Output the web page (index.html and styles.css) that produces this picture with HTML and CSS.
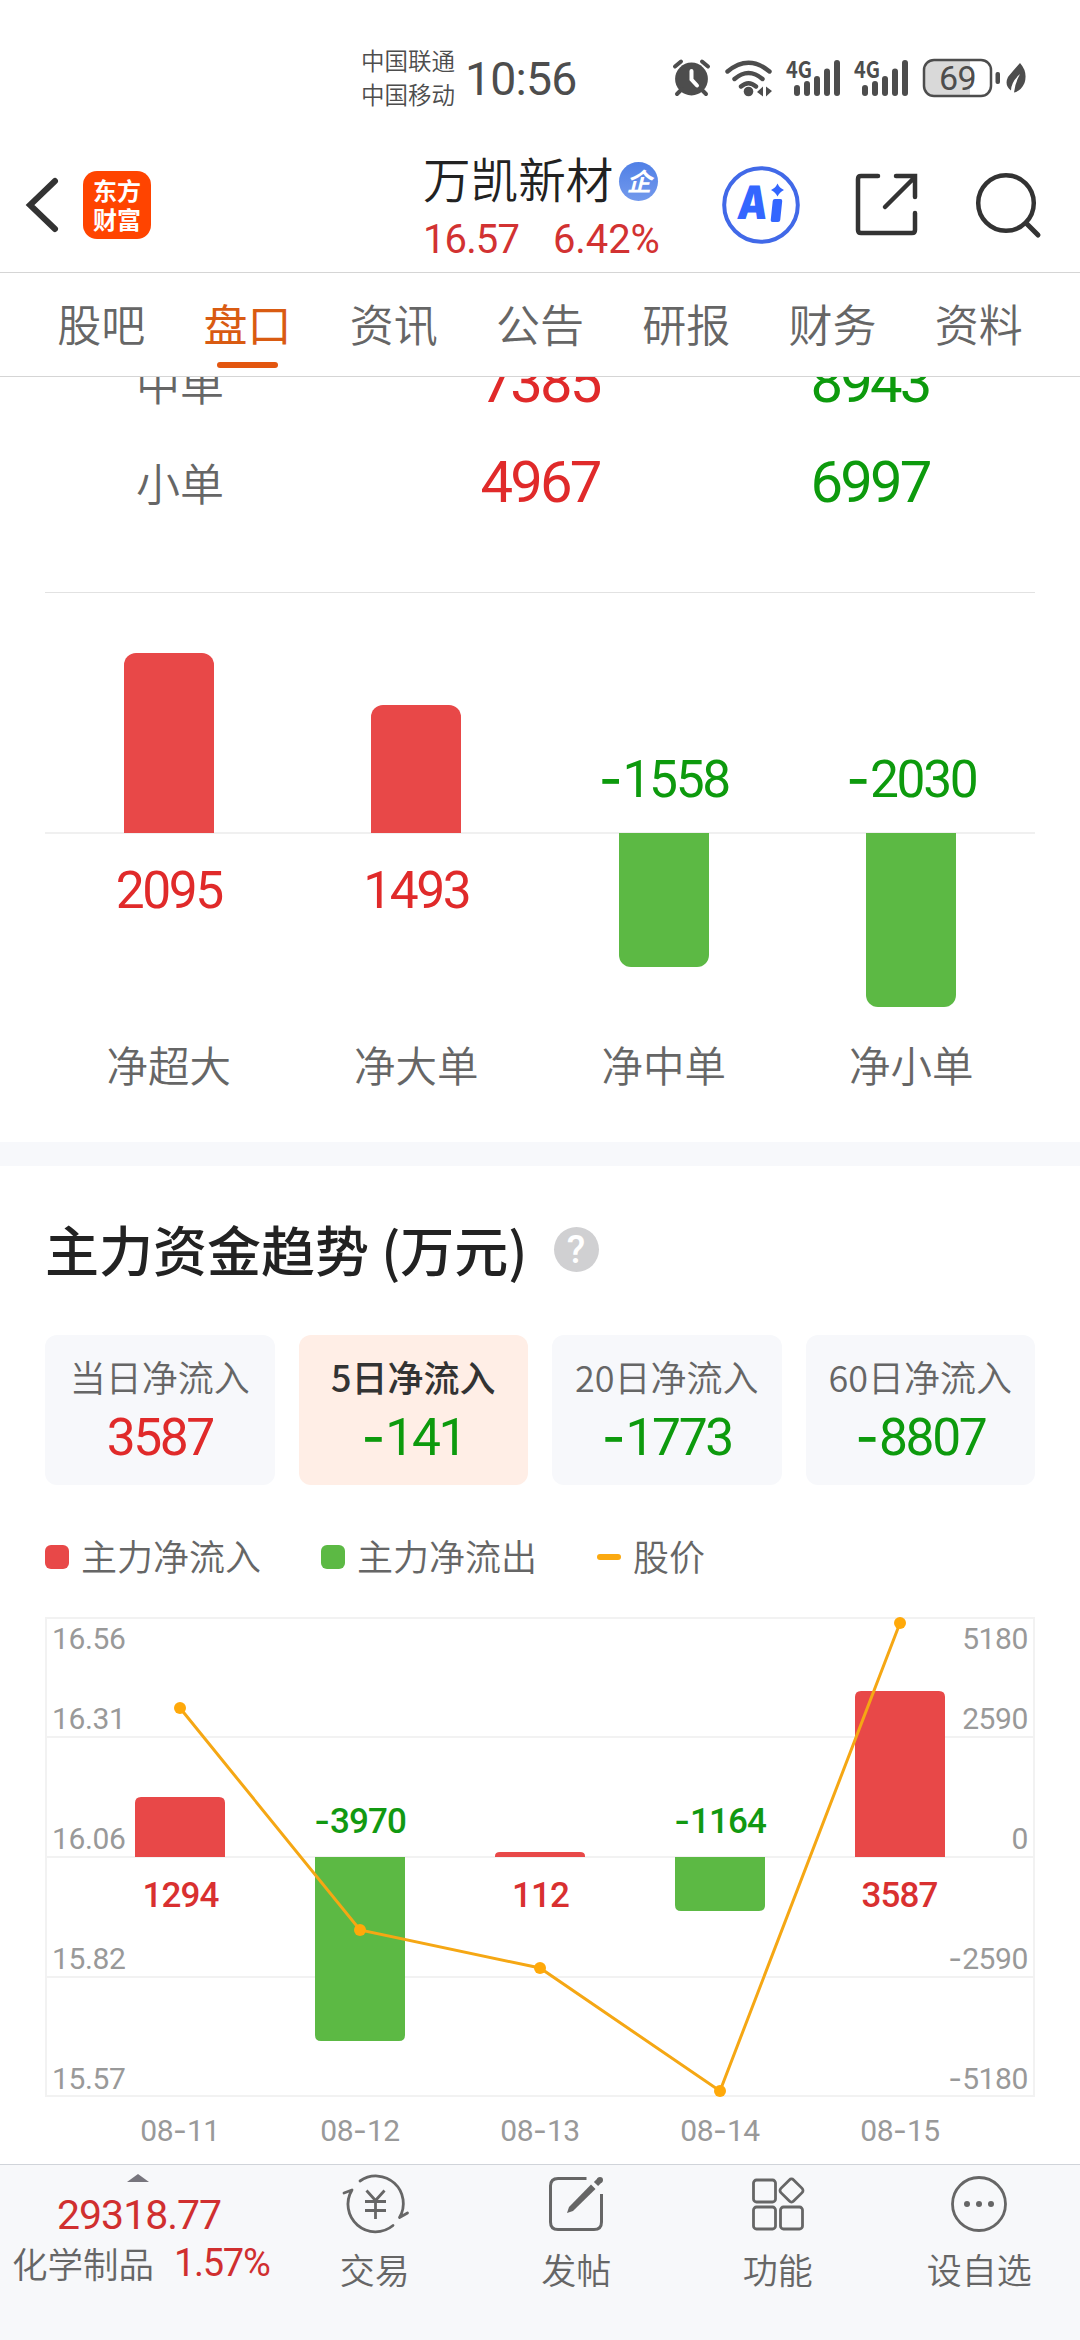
FILE: index.html
```html
<!DOCTYPE html>
<html lang="zh-CN">
<head>
    <meta charset="UTF-8">
    <meta name="viewport" content="width=device-width, initial-scale=1.0">
    <title>万凯新材 - 盘口</title>
    <link rel="stylesheet" href="styles.css">
</head>
<body>
    <!-- Status bar -->
    <div class="status-bar">
        <div class="carriers">
            <div>中国联通</div>
            <div>中国移动</div>
        </div>
        <div class="time">10:56</div>
        <svg class="status-icons" width="360" height="46" viewBox="0 0 360 46">
            <!-- alarm -->
            <g fill="none" stroke="#4d4d4d" stroke-width="4" stroke-linecap="round">
                <circle cx="20.5" cy="24" r="16.4" fill="#4d4d4d" stroke="none"/>
                <path d="M4 11.5L10 6.5M31 6.5L37 11.5M6 39L11 34M35 39L30 34"/>
                <path d="M20.5 16V24.5L26 30.5" stroke="#fff"/>
            </g>
            <!-- wifi -->
            <g fill="none" stroke="#4d4d4d" stroke-width="4.4" stroke-linecap="round">
                <path d="M56.5 16.5Q77.5 -1 98.5 16.5M63.5 24Q77.5 12 91.5 24M70 31.5Q77.5 25 85 31.5"/>
                <circle cx="77.5" cy="36.5" r="4.8" fill="#4d4d4d" stroke="none"/>
                <path d="M92 31.5V41.5L86 37ZM95 31.5V41.5L101 36Z" fill="#4d4d4d" stroke="none"/>
            </g>
            <!-- signals -->
            <g fill="#4d4d4d">
                <text class="net" x="115" y="22.5" textLength="26" lengthAdjust="spacingAndGlyphs">4G</text>
                <rect x="123" y="30" width="6" height="11" rx="3"/>
                <rect x="133" y="26" width="6" height="15" rx="3"/>
                <rect x="143" y="21" width="6" height="20" rx="3"/>
                <rect x="153" y="13.5" width="6" height="27.5" rx="3"/>
                <rect x="163" y="5" width="6" height="36" rx="3"/>
                <text class="net" x="183" y="22.5" textLength="26" lengthAdjust="spacingAndGlyphs">4G</text>
                <rect x="191" y="30" width="6" height="11" rx="3"/>
                <rect x="201" y="26" width="6" height="15" rx="3"/>
                <rect x="211" y="21" width="6" height="20" rx="3"/>
                <rect x="221" y="13.5" width="6" height="27.5" rx="3"/>
                <rect x="231" y="5" width="6" height="36" rx="3"/>
            </g>
            <!-- battery -->
            <path d="M299 5H264Q254 5 254 15V31Q254 41 264 41H299Z" fill="#d9d9d9"/>
            <rect x="253" y="5" width="67" height="36" rx="10" fill="none" stroke="#4d4d4d" stroke-width="2.5"/>
            <text class="battery" x="286.5" y="35" text-anchor="middle">69</text>
            <rect x="324.5" y="17" width="4.5" height="12" rx="2" fill="#4d4d4d"/>
            <path d="M349 8Q357 17 353.5 28Q350 36 343 37.5Q344 28 349 19Q340 27 340 35.5Q333 30 337 22Q341 17 349 8Z" fill="#4d4d4d"/>
        </svg>
    </div>

    <!-- Header -->
    <div class="header">
        <svg class="back" width="34" height="60" viewBox="0 0 34 60">
            <path d="M29 6L4 30L29 54" fill="none" stroke="#333" stroke-width="6" stroke-linecap="round"/>
        </svg>
        <div class="logo">东方<br>财富</div>
        <div class="stock">
            <div class="stock-name">万凯新材<span class="badge">企</span></div>
            <div class="stock-price"><span>16.57</span><span class="percent">6.42%</span></div>
        </div>
        <div class="header-icons">
            <svg width="80" height="80" viewBox="0 0 80 80">
                <circle cx="40" cy="40" r="36.8" fill="none" stroke="#4169e8" stroke-width="4"/>
                <g transform="translate(6 0) skewX(-6)" fill="#3366ff">
                    <text class="ai" x="15" y="54" textLength="30" lengthAdjust="spacingAndGlyphs">A</text>
                    <rect x="49.5" y="34" width="9.5" height="23" rx="2"/>
                </g>
                <path d="M56.5 18.5Q58.5 23 63 25Q58.500 27 56.5 31.5Q54.500 27 50 25Q54.500 23 56.5 18.5Z" fill="#3366ff"/>
            </svg>
            <svg width="66" height="66" viewBox="0 0 66 66">
                <path d="M24 4H7Q4 4 4 7V58Q4 61 7 61H58Q61 61 61 58V41M42 4H61V25M31 35L60 6" fill="none" stroke="#333" stroke-width="4.5" stroke-linecap="round"/>
            </svg>
            <svg width="70" height="70" viewBox="0 0 70 70">
                <circle cx="32" cy="32" r="27.8" fill="none" stroke="#333" stroke-width="4.5"/>
                <path d="M52 52L64 64" stroke="#333" stroke-width="5" stroke-linecap="round"/>
            </svg>
        </div>
    </div>

    <!-- Tabs -->
    <div class="tabs">
        <div class="tab">股吧</div>
        <div class="tab active">盘口</div>
        <div class="tab">资讯</div>
        <div class="tab">公告</div>
        <div class="tab">研报</div>
        <div class="tab">财务</div>
        <div class="tab">资料</div>
    </div>

    <div class="content">
        <!-- Order table -->
        <div class="orders">
            <div class="order-row">
                <div class="order-name">中单</div>
                <div class="order-num red">7385</div>
                <div class="order-num green">8943</div>
            </div>
            <div class="order-row">
                <div class="order-name">小单</div>
                <div class="order-num red">4967</div>
                <div class="order-num green">6997</div>
            </div>
        </div>

        <!-- Net order bars -->
        <div class="net-chart">
            <div class="net-col">
                <div class="upper"><div class="bar up" style="height: 180px"></div></div>
                <div class="lower"><div class="net-value red">2095</div></div>
                <div class="net-label">净超大</div>
            </div>
            <div class="net-col">
                <div class="upper"><div class="bar up" style="height: 128px"></div></div>
                <div class="lower"><div class="net-value red">1493</div></div>
                <div class="net-label">净大单</div>
            </div>
            <div class="net-col">
                <div class="upper"><div class="net-value green"><span class="minus">-</span>1558</div></div>
                <div class="lower"><div class="bar down" style="height: 134px"></div></div>
                <div class="net-label">净中单</div>
            </div>
            <div class="net-col">
                <div class="upper"><div class="net-value green"><span class="minus">-</span>2030</div></div>
                <div class="lower"><div class="bar down" style="height: 174px"></div></div>
                <div class="net-label">净小单</div>
            </div>
        </div>

        <!-- Main fund trend -->
        <div class="trend">
            <div class="trend-title">主力资金趋势 (万元)<span class="help">?</span></div>
            <div class="cards">
                <div class="card">
                    <div class="card-label">当日净流入</div>
                    <div class="card-value red">3587</div>
                </div>
                <div class="card selected">
                    <div class="card-label">5日净流入</div>
                    <div class="card-value green"><span class="minus">-</span>141</div>
                </div>
                <div class="card">
                    <div class="card-label">20日净流入</div>
                    <div class="card-value green"><span class="minus">-</span>1773</div>
                </div>
                <div class="card">
                    <div class="card-label">60日净流入</div>
                    <div class="card-value green"><span class="minus">-</span>8807</div>
                </div>
            </div>
            <div class="legend">
                <div class="legend-item"><span class="dot dot-red"></span>主力净流入</div>
                <div class="legend-item"><span class="dot dot-green"></span>主力净流出</div>
                <div class="legend-item"><span class="dash"></span>股价</div>
            </div>
        </div>
        <svg class="trend-chart" width="1080" height="589" viewBox="0 0 1080 589">
            <path d="M46 43H1034V521H46ZM46 162H1034M46 282H1034M46 402H1034" fill="none" stroke="#f2f2f2" stroke-width="2"/>
            <g class="axis">
                <text x="52" y="73.5">16.56</text>
                <text x="52" y="153.5">16.31</text>
                <text x="52" y="273.5">16.06</text>
                <text x="52" y="393.5">15.82</text>
                <text x="52" y="513.5">15.57</text>
            </g>
            <g class="axis" text-anchor="end">
                <text x="1028" y="73.5">5180</text>
                <text x="1028" y="153.5">2590</text>
                <text x="1028" y="273.5">0</text>
                <text x="1028" y="393.5"><tspan class="minus">-</tspan>2590</text>
                <text x="1028" y="513.5"><tspan class="minus">-</tspan>5180</text>
            </g>
            <g fill="#e84848">
                <path d="M135 282V228Q135 222 141 222H219Q225 222 225 228V282Z"/>
                <path d="M495 282V281Q495 277 500 277H580Q585 277 585 281V282Z"/>
                <path d="M855 282V122Q855 116 861 116H939Q945 116 945 122V282Z"/>
            </g>
            <g fill="#5cb944">
                <path d="M315 282V460Q315 466 321 466H399Q405 466 405 460V282Z"/>
                <path d="M675 282V330Q675 336 681 336H759Q765 336 765 330V282Z"/>
            </g>
            <g class="point-value red-text" text-anchor="middle">
                <text x="180.5" y="332">1294</text>
                <text x="540.5" y="332">112</text>
                <text x="899.5" y="332">3587</text>
            </g>
            <g class="point-value green-text" text-anchor="middle">
                <text x="360" y="258"><tspan class="minus">-</tspan>3970</text>
                <text x="720" y="258"><tspan class="minus">-</tspan>1164</text>
            </g>
            <polyline points="180,133 360,355 540,393 720,516 900,48" fill="none" stroke="#f5a714" stroke-width="3"/>
            <g fill="#ffa90a">
                <circle cx="180" cy="133" r="6"/>
                <circle cx="360" cy="355" r="6"/>
                <circle cx="540" cy="393" r="6"/>
                <circle cx="720" cy="516" r="6"/>
                <circle cx="900" cy="48" r="6"/>
            </g>
            <g class="axis" text-anchor="middle">
                <text x="180" y="566">08<tspan class="minus">-</tspan>11</text>
                <text x="360" y="566">08<tspan class="minus">-</tspan>12</text>
                <text x="540" y="566">08<tspan class="minus">-</tspan>13</text>
                <text x="720" y="566">08<tspan class="minus">-</tspan>14</text>
                <text x="900" y="566">08<tspan class="minus">-</tspan>15</text>
            </g>
        </svg>
    </div>

    <!-- Bottom bar -->
    <div class="bottom-bar">
        <div class="index">
            <div class="arrow-up"></div>
            <div class="index-value">29318.77</div>
            <div class="index-info"><span>化学制品</span><span class="index-percent">1.57%</span></div>
        </div>
        <div class="nav-item">
            <svg width="70" height="66" viewBox="0 0 70 66">
                <g fill="none" stroke="#666" stroke-width="2.8" stroke-linecap="round" stroke-linejoin="round">
                    <path d="M20 11A27.5 27.5 0 0 1 59.5 47.5L67.5 43"/>
                    <path d="M53 55.5A27.5 27.5 0 0 1 12 20L4 23"/>
                    <path d="M26.5 20.5L35.5 30.5L44.5 20.5M25 31.5H46M25 40.5H46M35.5 30V49" stroke-linecap="butt"/>
                </g>
            </svg>
            <div>交易</div>
        </div>
        <div class="nav-item">
            <svg width="70" height="66" viewBox="0 0 70 66">
                <path d="M45.5 8.5H17Q9.5 8.5 9.5 16V52Q9.5 59.5 17 59.5H53Q60.5 59.5 60.5 52V24" fill="none" stroke="#666" stroke-width="3"/>
                <path d="M26 43L28 37L50 14.5L54.5 19L32 41Z" fill="#666"/>
                <path d="M55 14L59 10" stroke="#666" stroke-width="6"/>
                <circle cx="59" cy="10" r="3" fill="#666"/>
            </svg>
            <div>发帖</div>
        </div>
        <div class="nav-item">
            <svg width="70" height="66" viewBox="0 0 70 66">
                <g fill="none" stroke="#666" stroke-width="2.8">
                    <rect x="10.5" y="10" width="22" height="22" rx="3"/>
                    <rect x="10.5" y="37" width="22" height="22" rx="3"/>
                    <rect x="37.5" y="37" width="22" height="22" rx="3"/>
                    <rect x="39.5" y="11.5" width="18" height="18" rx="3" transform="rotate(45 48.5 20.5)"/>
                </g>
            </svg>
            <div>功能</div>
        </div>
        <div class="nav-item">
            <svg width="70" height="66" viewBox="0 0 70 66">
                <circle cx="35" cy="34" r="26.5" fill="none" stroke="#666" stroke-width="2.8"/>
                <g fill="#666">
                    <circle cx="23" cy="34" r="3"/>
                    <circle cx="35" cy="34" r="3"/>
                    <circle cx="47" cy="34" r="3"/>
                </g>
            </svg>
            <div>设自选</div>
        </div>
    </div>
</body>
</html>
```
FILE: styles.css
```css
/* Global styles */
* {
    box-sizing: border-box;
}

body {
    margin: 0;
    width: 1080px;
    height: 2340px;
    display: flex;
    flex-direction: column;
    overflow: hidden;
    background-color: #fff;
    font-family: "Noto Sans CJK SC", sans-serif;
    font-weight: 350;
    color: #666;
}

svg {
    display: block;
    flex-shrink: 0;
    overflow: visible;
}

/* Number styles */
.time,
.battery,
.stock-price,
.order-num,
.net-value,
.card-value,
.axis,
.point-value,
.index-value,
.index-percent,
.help {
    font-family: "Roboto", sans-serif;
    font-weight: 400;
}

.red {
    color: #e02a2a;
}

.green {
    color: #0d9a0d;
}

.minus {
    font-family: "Inter", sans-serif;
    line-height: 0;
    letter-spacing: 0;
}

/* Status bar */
.status-bar {
    height: 147px;
    padding: 43px 30px 0 361px;
    display: flex;
    align-items: flex-start;
    color: #4d4d4d;
}

.carriers {
    font-size: 23.5px;
    line-height: 34px;
    width: 104px;
}

.time {
    font-size: 46.4px;
    line-height: 72px;
    width: 205px;
    letter-spacing: -0.8px;
}

.status-icons {
    margin-top: 12px;
    margin-left: 1px;
}

.net {
    font-family: "Noto Sans CJK SC", sans-serif;
    font-size: 23px;
    font-weight: 700;
}

.battery {
    font-size: 34px;
    letter-spacing: -0.5px;
    fill: #4d4d4d;
}

/* Header */
.header {
    height: 126px;
    display: flex;
    align-items: flex-start;
    border-bottom: 1px solid #d5d5d5;
}

.back {
    margin: 28px 0 0 26px;
}

.logo {
    width: 68px;
    height: 68px;
    margin: 24px 0 0 23px;
    padding-top: 4px;
    border-radius: 14px;
    background-color: #ff4400;
    color: #fff;
    font-size: 24px;
    font-weight: 700;
    line-height: 29px;
    text-align: center;
}

.stock {
    margin-left: 272px;
    width: 292px;
    padding-top: 1px;
}

.stock-name {
    height: 60px;
    display: flex;
    align-items: center;
    font-size: 47.6px;
    line-height: 60px;
    color: #222;
}

.badge {
    width: 39px;
    height: 39px;
    margin: 7px 0 0 6px;
    border-radius: 50%;
    background: linear-gradient(#5080e6, #7399ec);
    color: #fff;
    font-size: 25px;
    font-weight: 700;
    font-style: italic;
    line-height: 36px;
    text-align: center;
}

.stock-price {
    display: flex;
    font-size: 40px;
    line-height: 63px;
    letter-spacing: -0.9px;
    color: #d23232;
}

.percent {
    margin-left: 34px;
    letter-spacing: -0.1px;
}

.header-icons {
    display: flex;
    align-items: flex-start;
    padding-top: 18px;
    margin-left: 6px;
}

.header-icons svg:nth-child(2) {
    margin: 7px 0 0 53px;
}

.header-icons svg:nth-child(3) {
    margin: 6px 0 0 54px;
}

/* Tabs */
.tabs {
    height: 104px;
    padding: 0 28px;
    display: flex;
    border-bottom: 1px solid #d5d5d5;
}

.tab {
    flex: 1;
    display: flex;
    flex-direction: column;
    align-items: center;
    padding-top: 20px;
    font-size: 44px;
    line-height: 60px;
}

.tab.active {
    color: #d95b12;
    font-weight: 400;
}

.tab.active::after {
    content: "";
    width: 61px;
    height: 6px;
    margin-top: 9px;
    border-radius: 3px;
    background-color: #e3560f;
}

/* Scrolled content */
.content {
    height: 1787px;
    overflow: hidden;
}

.orders {
    margin: -45px 45px 0;
    padding-bottom: 60px;
    border-bottom: 1px solid #e2e2e2;
}

.order-row {
    height: 100px;
    display: grid;
    grid-template-columns: 270px 450px 210px;
    align-items: center;
    text-align: center;
}

.order-name {
    font-size: 44px;
}

.order-num {
    font-size: 58px;
    font-weight: 450;
    letter-spacing: -2.8px;
}

/* Net order bars */
.net-chart {
    height: 549px;
    padding: 0 45px;
    display: flex;
    background: linear-gradient(#f0f0f0, #f0f0f0) 45px 239px / 990px 2px no-repeat;
}

.net-col {
    flex: 1;
    text-align: center;
}

.upper {
    height: 240px;
    display: flex;
    flex-direction: column;
    justify-content: flex-end;
    align-items: center;
}

.lower {
    height: 201px;
    display: flex;
    flex-direction: column;
    align-items: center;
}

.bar {
    width: 90px;
}

.bar.up {
    background-color: #e84848;
    border-radius: 12px 12px 0 0;
}

.bar.down {
    background-color: #5cb944;
    border-radius: 0 0 12px 12px;
}

.net-value,
.card-value {
    font-size: 51.5px;
    font-weight: 450;
    line-height: 60px;
    letter-spacing: -2.4px;
}

.upper .net-value {
    margin-bottom: 23px;
}

.lower .net-value {
    margin-top: 28px;
}

.net-label {
    font-size: 41.5px;
    line-height: 60px;
}

/* Main fund trend */
.trend {
    padding: 43px 45px 0;
    border-top: 24px solid #f7f8fb;
}

.trend-title {
    display: flex;
    align-items: center;
    font-size: 54px;
    font-weight: 500;
    line-height: 80px;
    color: #222;
}

.help {
    width: 45px;
    height: 45px;
    margin-left: 26px;
    border-radius: 50%;
    background-color: #d0d0d2;
    color: #fff;
    font-size: 38px;
    font-weight: 500;
    line-height: 46px;
    text-align: center;
}

.cards {
    display: grid;
    grid-template-columns: repeat(4, 1fr);
    gap: 24px;
    margin-top: 46px;
}

.card {
    height: 150px;
    padding-top: 16px;
    border-radius: 12px;
    background-color: #f7f8fb;
    text-align: center;
}

.card.selected {
    background-color: #ffeee6;
}

.card-label {
    font-size: 36px;
    line-height: 50px;
}

.selected .card-label {
    color: #333;
    font-weight: 500;
}

.card-value {
    margin-top: 7px;
}

.legend {
    display: flex;
    gap: 60px;
    margin-top: 50px;
    font-size: 36px;
    line-height: 40px;
}

.legend-item {
    display: flex;
    gap: 12px;
}

.dot {
    width: 24px;
    height: 24px;
    margin-top: 10px;
    border-radius: 6px;
}

.dot-red {
    background-color: #e84848;
}

.dot-green {
    background-color: #5cb944;
}

.dash {
    width: 24px;
    height: 6px;
    margin-top: 19px;
    border-radius: 3px;
    background-color: #fba910;
}

.axis {
    font-size: 30px;
    letter-spacing: -0.4px;
    fill: #999;
}

.point-value {
    font-size: 35px;
    font-weight: 500;
    letter-spacing: -0.9px;
}

.red-text {
    fill: #d93030;
}

.green-text {
    fill: #119911;
}

.ai {
    font-family: "Inter", sans-serif;
    font-size: 46px;
    font-weight: 900;
}

/* Bottom bar */
.bottom-bar {
    height: 176px;
    display: flex;
    background-color: #f7f8fa;
    border-top: 1px solid #d0d4da;
}

.index {
    width: 274px;
    padding: 9px 0 0;
}

.arrow-up {
    width: 22px;
    height: 8px;
    margin-left: 127px;
    background-color: #77757d;
    clip-path: polygon(50% 0, 100% 100%, 0 100%);
}

.index-value {
    margin: 8px 0 0 57px;
    font-size: 41px;
    line-height: 50px;
    letter-spacing: -1px;
    color: #d02f2f;
}

.index-info {
    display: flex;
    margin-top: -1px;
    padding-left: 12px;
    font-size: 35.5px;
    line-height: 48px;
}

.index-percent {
    margin-left: 20px;
    font-size: 38px;
    letter-spacing: -1.3px;
    color: #d02f2f;
}

.nav-item {
    flex: 1;
    display: flex;
    flex-direction: column;
    align-items: center;
    padding-top: 5px;
    font-size: 35px;
    line-height: 48px;
}

.nav-item svg {
    margin-bottom: 9px;
}
```
